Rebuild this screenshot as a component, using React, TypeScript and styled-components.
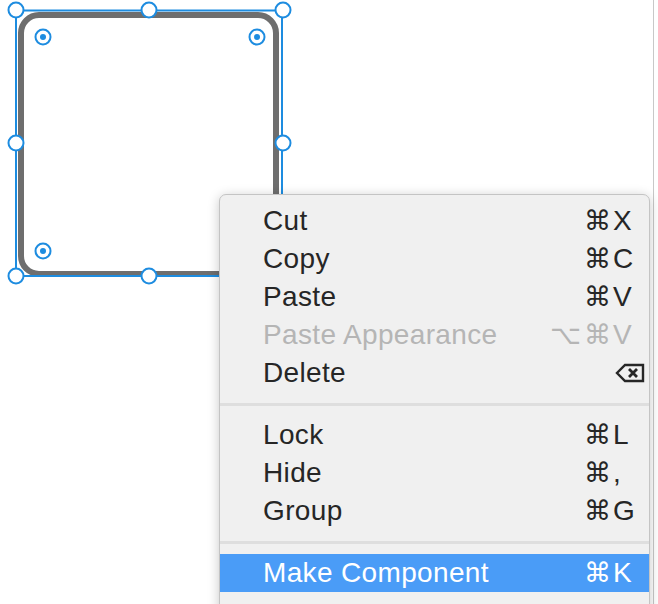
import styled, { createGlobalStyle } from "styled-components";

const GlobalStyle = createGlobalStyle`
  html, body {
    margin: 0;
    padding: 0;
    background: #ffffff;
    overflow: hidden;
  }
`;

const BLUE = "#1d8ce0";

const Stage = styled.div`
  position: relative;
  width: 658px;
  height: 604px;
  overflow: hidden;
  background: #ffffff;
  font-family: "Liberation Sans", "DejaVu Sans", sans-serif;
`;

const Canvas = styled.svg`
  display: block;
`;

const Menu = styled.div`
  position: absolute;
  left: 219px;
  top: 194px;
  width: 431px;
  box-sizing: border-box;
  padding: 7px 0 20px;
  background: #f0f0f0;
  border: 1px solid #c4c4c4;
  border-radius: 7px 7px 0 0;
  box-shadow: 0 2px 12px rgba(0, 0, 0, 0.22);
`;

const Item = styled.div<{ $disabled?: boolean; $active?: boolean }>`
  display: grid;
  grid-template-columns: 1fr auto 37px;
  align-items: center;
  height: 38px;
  padding-left: 43px;
  font-size: 28px;
  line-height: 38px;
  color: ${(p) => (p.$disabled ? "#b5b5b5" : p.$active ? "#ffffff" : "#262626")};
  background: ${(p) => (p.$active ? "#4a9cf7" : "transparent")};
`;

const Label = styled.span`
  white-space: nowrap;
  letter-spacing: 0.35px;
`;

const Mods = styled.span`
  display: flex;
  justify-content: flex-end;
  gap: 3px;
  font-family: "DejaVu Sans", sans-serif;
  font-size: 27px;
  margin-right: 1px;
`;

const Key = styled.span`
  padding-left: 1px;
  display: flex;
  align-items: center;
`;

const Separator = styled.div`
  height: 3px;
  margin: 11px 0 10px;
  background: #dedede;
`;

const Handle = ({ cx, cy }: { cx: number; cy: number }) => (
  <circle cx={cx} cy={cy} r={7.5} fill="#ffffff" stroke={BLUE} strokeWidth={2} />
);

const RadiusHandle = ({ cx, cy }: { cx: number; cy: number }) => (
  <g>
    <circle cx={cx} cy={cy} r={7.5} fill="#ffffff" stroke={BLUE} strokeWidth={2} />
    <circle cx={cx} cy={cy} r={3} fill={BLUE} />
  </g>
);

const DeleteIcon = () => (
  <svg width="30" height="20" viewBox="0 0 30 20" style={{ marginLeft: 2 }}>
    <path
      d="M10 2 H28 V18 H10 L2 10 Z"
      fill="none"
      stroke="#262626"
      strokeWidth="2.4"
      strokeLinejoin="miter"
    />
    <path d="M14 6 L22 14 M22 6 L14 14" stroke="#262626" strokeWidth="2.8" />
  </svg>
);

type Entry = { label: string; mods?: string[]; key?: string; disabled?: boolean; active?: boolean; del?: boolean };

const groups: Entry[][] = [
  [
    { label: "Cut", mods: ["⌘"], key: "X" },
    { label: "Copy", mods: ["⌘"], key: "C" },
    { label: "Paste", mods: ["⌘"], key: "V" },
    { label: "Paste Appearance", mods: ["⌥", "⌘"], key: "V", disabled: true },
    { label: "Delete", del: true },
  ],
  [
    { label: "Lock", mods: ["⌘"], key: "L" },
    { label: "Hide", mods: ["⌘"], key: "," },
    { label: "Group", mods: ["⌘"], key: "G" },
  ],
  [{ label: "Make Component", mods: ["⌘"], key: "K", active: true }],
];

export default function App() {
  return (
    <Stage>
      <GlobalStyle />
      <Canvas width={658} height={604}>
        <rect x={21} y={15} width={255} height={259} rx={18} fill="#ffffff" stroke="#6e6e6e" strokeWidth={6} />
        <rect x={16} y={10.5} width={266} height={265.5} fill="none" stroke={BLUE} strokeWidth={2} />
        <RadiusHandle cx={43} cy={37} />
        <RadiusHandle cx={257} cy={37} />
        <RadiusHandle cx={43} cy={251} />
        <Handle cx={16} cy={10} />
        <Handle cx={149} cy={10} />
        <Handle cx={283} cy={10} />
        <Handle cx={16} cy={143} />
        <Handle cx={283} cy={143} />
        <Handle cx={16} cy={276} />
        <Handle cx={149} cy={276} />
        <Handle cx={283} cy={276} />
        <line x1={653.5} y1={0} x2={653.5} y2={604} stroke="#c8c8c8" strokeWidth={1} />
      </Canvas>
      <Menu>
        {groups.map((group, gi) => (
          <div key={gi}>
            {gi > 0 && <Separator />}
            {group.map((e) => (
              <Item key={e.label} $disabled={e.disabled} $active={e.active}>
                <Label>{e.label}</Label>
                <Mods>
                  {(e.mods ?? []).map((m) => (
                    <span key={m}>{m}</span>
                  ))}
                </Mods>
                <Key>{e.del ? <DeleteIcon /> : e.key}</Key>
              </Item>
            ))}
          </div>
        ))}
      </Menu>
    </Stage>
  );
}
